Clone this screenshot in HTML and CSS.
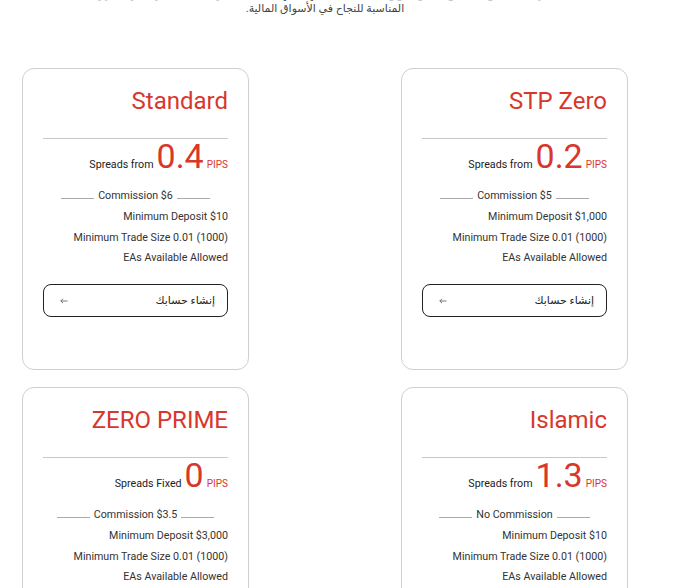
FILE: index.html
```html
<!DOCTYPE html>
<html lang="ar">
<head>
<meta charset="utf-8">
<title>Account types</title>
<link rel="stylesheet" href="styles.css">
</head>
<body>
<div class="page">
  <div class="intro">
    <p class="intro-lead">نقدم لك مجموعة متنوعة من أنواع الحسابات التي تلبي احتياجاتك وتمنحك الأدوات والظروف</p>
    <p class="intro-sub">المناسبة للنجاح في الأسواق المالية.</p>
  </div>
  <div class="grid">
    <div class="card">
      <div class="title">Standard</div>
      <div class="rule"></div>
      <div class="spread"><span class="sp-label">Spreads from</span><span class="sp-num">0.4</span><span class="sp-unit">PIPS</span></div>
      <div class="commission"><span class="dash"></span><span>Commission $6</span><span class="dash"></span></div>
      <div class="row">Minimum Deposit $10</div>
      <div class="row">Minimum Trade Size 0.01 (1000)</div>
      <div class="row">EAs Available Allowed</div>
      <a class="btn" href="#"><svg class="arrow" width="8" height="6" viewBox="0 0 8 6"><path d="M7.5 3H0.8M3 0.8L0.8 3L3 5.2" fill="none" stroke="#666" stroke-width="0.9"/></svg><span class="btn-text">إنشاء حسابك</span></a>
    </div>
    <div class="card">
      <div class="title">STP Zero</div>
      <div class="rule"></div>
      <div class="spread"><span class="sp-label">Spreads from</span><span class="sp-num">0.2</span><span class="sp-unit">PIPS</span></div>
      <div class="commission"><span class="dash"></span><span>Commission $5</span><span class="dash"></span></div>
      <div class="row">Minimum Deposit $1,000</div>
      <div class="row">Minimum Trade Size 0.01 (1000)</div>
      <div class="row">EAs Available Allowed</div>
      <a class="btn" href="#"><svg class="arrow" width="8" height="6" viewBox="0 0 8 6"><path d="M7.5 3H0.8M3 0.8L0.8 3L3 5.2" fill="none" stroke="#666" stroke-width="0.9"/></svg><span class="btn-text">إنشاء حسابك</span></a>
    </div>
    <div class="card">
      <div class="title">ZERO PRIME</div>
      <div class="rule"></div>
      <div class="spread"><span class="sp-label">Spreads Fixed</span><span class="sp-num">0</span><span class="sp-unit">PIPS</span></div>
      <div class="commission"><span class="dash"></span><span>Commission $3.5</span><span class="dash"></span></div>
      <div class="row">Minimum Deposit $3,000</div>
      <div class="row">Minimum Trade Size 0.01 (1000)</div>
      <div class="row">EAs Available Allowed</div>
      <a class="btn" href="#"><svg class="arrow" width="8" height="6" viewBox="0 0 8 6"><path d="M7.5 3H0.8M3 0.8L0.8 3L3 5.2" fill="none" stroke="#666" stroke-width="0.9"/></svg><span class="btn-text">إنشاء حسابك</span></a>
    </div>
    <div class="card">
      <div class="title">Islamic</div>
      <div class="rule"></div>
      <div class="spread"><span class="sp-label">Spreads from</span><span class="sp-num">1.3</span><span class="sp-unit">PIPS</span></div>
      <div class="commission"><span class="dash"></span><span>No Commission</span><span class="dash"></span></div>
      <div class="row">Minimum Deposit $10</div>
      <div class="row">Minimum Trade Size 0.01 (1000)</div>
      <div class="row">EAs Available Allowed</div>
      <a class="btn" href="#"><svg class="arrow" width="8" height="6" viewBox="0 0 8 6"><path d="M7.5 3H0.8M3 0.8L0.8 3L3 5.2" fill="none" stroke="#666" stroke-width="0.9"/></svg><span class="btn-text">إنشاء حسابك</span></a>
    </div>
  </div>
</div>
</body>
</html>
```
FILE: styles.css
```css
html, body {
  margin: 0;
  padding: 0;
  background: #ffffff;
  overflow: hidden;
}
body {
  font-family: Roboto, "DejaVu Sans", sans-serif;
  color: #222;
}
.page {
  width: 606px;
  padding-left: 22px;
}
.intro {
  text-align: center;
  margin-top: -12px;
  direction: rtl;
}
.intro p {
  margin: 0;
  font-size: 11px;
  line-height: 14px;
}
.intro-lead {
  font-weight: bold;
  color: #222;
}
.intro-sub {
  color: #444;
}
.grid {
  display: grid;
  grid-template-columns: 227px 227px;
  justify-content: space-between;
  row-gap: 17px;
  margin-top: 52px;
}
.card {
  border: 1px solid #cfcfcf;
  border-radius: 12px;
  padding: 18px 20px 52px 20px;
  display: flex;
  flex-direction: column;
}
.title {
  font-size: 24px;
  line-height: 28px;
  color: #d8372c;
  text-align: right;
}
.rule {
  border-top: 1px solid #c8c8c8;
  margin-top: 23px;
}
.spread {
  display: flex;
  justify-content: flex-end;
  align-items: baseline;
  margin-top: 4px;
}
.sp-label {
  font-size: 10.7px;
  color: #222;
  margin-right: 3px;
}
.sp-num {
  font-size: 34px;
  line-height: 26px;
  color: #d8372c;
}
.sp-unit {
  font-size: 10px;
  color: #d8372c;
  margin-left: 3px;
}
.commission {
  margin-top: 15px;
  margin-bottom: 1px;
  display: flex;
  justify-content: center;
  align-items: baseline;
  gap: 4px;
  font-size: 10.7px;
  line-height: 20.3px;
  color: #333;
}
.dash {
  width: 33px;
  border-bottom: 1px solid #aaa;
  height: 0;
  align-self: center;
  position: relative;
  top: 2px;
}
.row {
  font-size: 10.7px;
  line-height: 20.3px;
  color: #333;
  text-align: right;
}
.btn {
  margin-top: 16px;
  height: 31px;
  border: 1px solid #222;
  border-radius: 8px;
  display: flex;
  align-items: center;
  justify-content: space-between;
  padding: 0 12px 0 16px;
  text-decoration: none;
  color: #222;
}
.arrow {
  display: block;
}
.btn-text {
  font-size: 11px;
  direction: rtl;
}
```
